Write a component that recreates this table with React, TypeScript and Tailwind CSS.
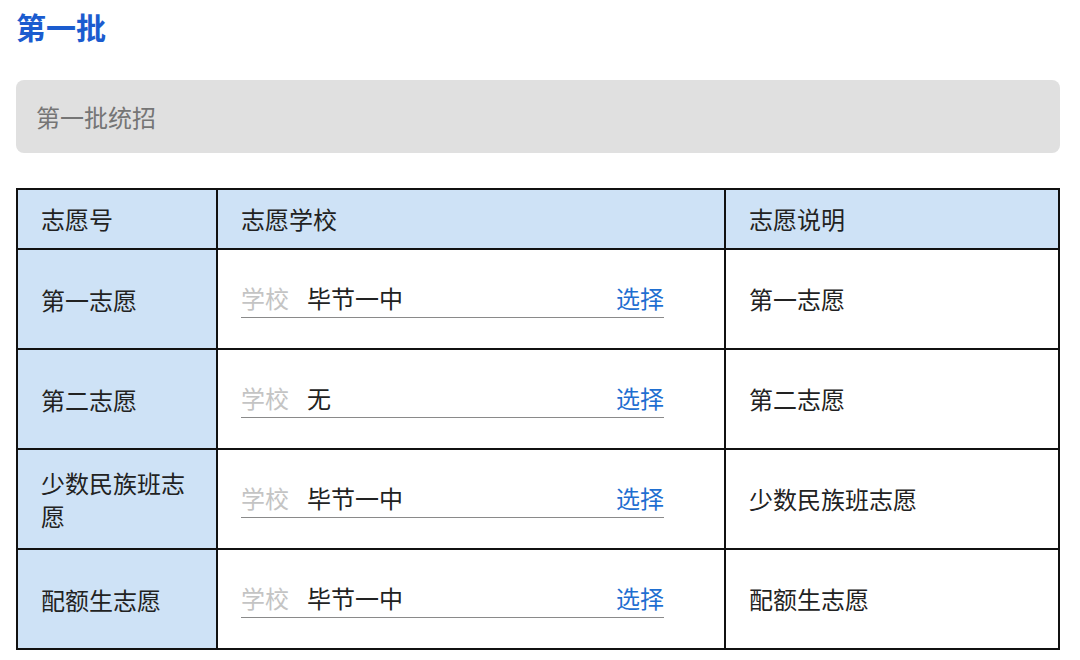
const rows = [
  { name: "第一志愿", school: "毕节一中", note: "第一志愿" },
  { name: "第二志愿", school: "无", note: "第二志愿" },
  { name: "少数民族班志愿", school: "毕节一中", note: "少数民族班志愿" },
  { name: "配额生志愿", school: "毕节一中", note: "配额生志愿" },
];

const App = () => {
  return (
    <div className="w-[1080px] h-[660px] bg-white overflow-hidden font-['Microsoft_YaHei','Noto_Sans_CJK_SC',sans-serif] text-[#222]">
      <div className="flex flex-col pl-4 w-[1060px]">
        <h1 className="mt-[5px] h-[42px] leading-[42px] text-[30px] font-bold text-[#1b5ccf]">第一批</h1>
        <div className="mt-[33px] h-[73px] rounded-lg bg-[#e0e0e0] flex items-center px-5 text-[24px] text-[#757575]">
          第一批统招
        </div>
        <div className="mt-[35px] grid grid-cols-[198px_506px_332px] grid-rows-[58px_repeat(4,98px)] gap-[2px] p-[2px] bg-[#111] text-[24px]">
          <div className="bg-[#cee2f6] flex items-center pl-[23px]">志愿号</div>
          <div className="bg-[#cee2f6] flex items-center pl-[23px]">志愿学校</div>
          <div className="bg-[#cee2f6] flex items-center pl-[23px]">志愿说明</div>
          {rows.map((r) => (
            <div key={r.name} className="contents">
              <div className="bg-[#cee2f6] flex items-center pl-[23px] pr-[20px] leading-[33px]">{r.name}</div>
              <div className="bg-white flex items-center pl-[23px] pr-[60px]">
                <div className="flex-1 flex items-center h-[36px] mt-[2px] border-b border-[#8a8a8a] pb-[4px]">
                  <span className="text-[#c4c4c4] w-[66px]">学校</span>
                  <span className="flex-1">{r.school}</span>
                  <span className="text-[#1f6fd1]">选择</span>
                </div>
              </div>
              <div className="bg-white flex items-center pl-[23px]">{r.note}</div>
            </div>
          ))}
        </div>
      </div>
    </div>
  );
};

export default App;
